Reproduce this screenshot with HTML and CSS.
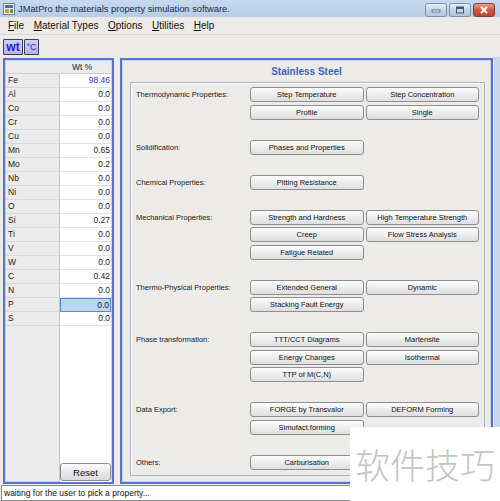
FILE: index.html
```html
<!DOCTYPE html>
<html>
<head>
  <title>JMatPro</title>
  <link rel="stylesheet" href="styles.css">
</head>
<body>
<div class="window">
  <div class="titlebar">
    <svg class="app-icon" width="12" height="12" viewBox="0 0 12 12">
      <rect x="0.5" y="0.5" width="11" height="11" fill="#f4f6fa" stroke="#6d7f9c"/>
      <rect x="2" y="2" width="8" height="3" fill="#3f6fc4"/>
      <rect x="2" y="6" width="4" height="4" fill="#e0903a"/>
      <rect x="7" y="6" width="3" height="4" fill="#5a9a4a"/>
    </svg>
    <span class="title">JMatPro the materials property simulation software.</span>
    <div class="win-buttons">
      <span class="wbtn"><svg width="10" height="6" viewBox="0 0 10 6"><rect x="1" y="3" width="8" height="2" fill="#fff" stroke="#44546e" stroke-width="0.8"/></svg></span>
      <span class="wbtn"><svg width="10" height="8" viewBox="0 0 10 8"><rect x="1.5" y="1" width="7" height="6" fill="none" stroke="#44546e" stroke-width="1"/><rect x="1.5" y="1" width="7" height="2" fill="#44546e"/></svg></span>
      <span class="wbtn close"><svg width="10" height="8" viewBox="0 0 10 8"><path d="M2 1 L8 7 M8 1 L2 7" stroke="#fff" stroke-width="2"/></svg></span>
    </div>
  </div>

  <div class="menubar">
    <span><u>F</u>ile</span>
    <span><u>M</u>aterial Types</span>
    <span><u>O</u>ptions</span>
    <span><u>U</u>tilities</span>
    <span><u>H</u>elp</span>
  </div>

  <div class="toolbar">
    <button class="unit wt">wt</button>
    <button class="unit degc">°C</button>
  </div>

  <div class="main">
    <div class="comp-panel">
      <div class="comp-head">Wt %</div>
      <div class="comp-body">
        <div class="names">
          <div class="cell">Fe</div>
          <div class="cell">Al</div>
          <div class="cell">Co</div>
          <div class="cell">Cr</div>
          <div class="cell">Cu</div>
          <div class="cell">Mn</div>
          <div class="cell">Mo</div>
          <div class="cell">Nb</div>
          <div class="cell">Ni</div>
          <div class="cell">O</div>
          <div class="cell">Si</div>
          <div class="cell">Ti</div>
          <div class="cell">V</div>
          <div class="cell">W</div>
          <div class="cell">C</div>
          <div class="cell">N</div>
          <div class="cell">P</div>
          <div class="cell">S</div>
        </div>
        <div class="values">
          <div class="cell base">98.46</div>
          <div class="cell">0.0</div>
          <div class="cell">0.0</div>
          <div class="cell">0.0</div>
          <div class="cell">0.0</div>
          <div class="cell">0.65</div>
          <div class="cell">0.2</div>
          <div class="cell">0.0</div>
          <div class="cell">0.0</div>
          <div class="cell">0.0</div>
          <div class="cell">0.27</div>
          <div class="cell">0.0</div>
          <div class="cell">0.0</div>
          <div class="cell">0.0</div>
          <div class="cell">0.42</div>
          <div class="cell">0.0</div>
          <div class="cell selected">0.0</div>
          <div class="cell">0.0</div>
          <button class="reset">Reset</button>
        </div>
      </div>
    </div>

    <div class="prop-panel">
      <div class="prop-title">Stainless Steel</div>
      <div class="group">
        <div class="section">
          <div class="label">Thermodynamic Properties:</div>
          <div class="btns">
            <button>Step Temperature</button>
            <button>Step Concentration</button>
            <button>Profile</button>
            <button>Single</button>
          </div>
        </div>
        <div class="section">
          <div class="label">Solidification:</div>
          <div class="btns">
            <button>Phases and Properties</button>
          </div>
        </div>
        <div class="section">
          <div class="label">Chemical Properties:</div>
          <div class="btns">
            <button>Pitting Resistance</button>
          </div>
        </div>
        <div class="section">
          <div class="label">Mechanical Properties:</div>
          <div class="btns">
            <button>Strength and Hardness</button>
            <button>High Temperature Strength</button>
            <button>Creep</button>
            <button>Flow Stress Analysis</button>
            <button>Fatigue Related</button>
          </div>
        </div>
        <div class="section">
          <div class="label">Thermo-Physical Properties:</div>
          <div class="btns">
            <button>Extended General</button>
            <button>Dynamic</button>
            <button>Stacking Fault Energy</button>
          </div>
        </div>
        <div class="section">
          <div class="label">Phase transformation:</div>
          <div class="btns">
            <button>TTT/CCT Diagrams</button>
            <button>Martensite</button>
            <button>Energy Changes</button>
            <button>Isothermal</button>
            <button>TTP of M(C,N)</button>
          </div>
        </div>
        <div class="section">
          <div class="label">Data Export:</div>
          <div class="btns">
            <button>FORGE by Transvalor</button>
            <button>DEFORM Forming</button>
            <button>Simufact.forming</button>
          </div>
        </div>
        <div class="section">
          <div class="label">Others:</div>
          <div class="btns">
            <button>Carburisation</button>
          </div>
        </div>
      </div>
    </div>
    <div class="frame-edge"></div>
  </div>

  <div class="status">waiting for the user to pick a property...</div>

  <div class="watermark">软件技巧</div>
</div>
</body>
</html>
```

FILE: styles.css
```css
body {
  margin: 0;
  background-color: #ecebe7;
  font-family: "Liberation Sans", Arial, sans-serif;
  color: #111;
}

.window {
  position: relative;
  width: 500px;
  height: 501px;
  overflow: hidden;
  display: flex;
  flex-direction: column;
}

/* title bar */
.titlebar {
  height: 17px;
  display: flex;
  align-items: center;
  padding-left: 3px;
  background: linear-gradient(#c6d9ef, #b7cce6);
}

.app-icon {
  flex: none;
}

.title {
  margin-left: 3px;
  font-size: 9.3px;
  color: #1c2e4c;
}

.win-buttons {
  margin-left: auto;
  margin-right: 5px;
  display: flex;
  gap: 2px;
  align-self: flex-start;
  margin-top: 3px;
}

.wbtn {
  width: 20px;
  height: 12px;
  display: flex;
  align-items: center;
  justify-content: center;
  border: 1px solid #7b8fad;
  border-radius: 3px;
  background: linear-gradient(#e6eef8, #c2d3e8 50%, #b3c7e1);
}

.wbtn.close {
  background: linear-gradient(#e9a08e, #cf5a40 50%, #c0442d);
  border-color: #8a3a2c;
}

/* menu */
.menubar {
  height: 17px;
  display: flex;
  align-items: center;
  gap: 9.5px;
  padding-left: 8px;
  font-size: 10px;
  color: #111;
  border-bottom: 1px solid #dcdad5;
}

.menubar u {
  text-decoration: underline;
  text-underline-offset: 1px;
}

/* toolbar */
.toolbar {
  height: 22px;
  box-sizing: border-box;
  padding: 4px 0 0 3px;
  display: flex;
  gap: 1px;
}

.unit {
  height: 16px;
  padding: 0;
  border: 1px solid #3a3a5a;
  border-radius: 1px;
  background: linear-gradient(#d2d2f6, #b4b4e8);
  color: #2222cc;
  font-family: "Liberation Sans", Arial, sans-serif;
  font-weight: bold;
}

.unit.wt {
  width: 20px;
  font-size: 12px;
}

.unit.degc {
  width: 15px;
  font-size: 9px;
  font-weight: normal;
}

/* main area */
.main {
  height: 428px;
  box-sizing: border-box;
  padding: 1px 0 1px 3px;
  display: flex;
}

.comp-panel {
  width: 111px;
  box-sizing: border-box;
  border: 2px solid #5474d2;
  box-shadow: inset 0 0 0 1px #c9d3ee;
  display: flex;
  flex-direction: column;
  background-color: #ebebeb;
}

.comp-head {
  height: 12px;
  line-height: 12px;
  padding-left: 66px;
  font-size: 8.5px;
  color: #222;
  border-bottom: 1px solid #cfcfcf;
  margin: 1px 1px 0 1px;
}

.comp-body {
  flex: 1;
  display: flex;
  margin: 0 1px 0 1px;
}

.names {
  width: 53px;
  border-right: 1px solid #c4c4c4;
}

.values {
  flex: 1;
  display: flex;
  flex-direction: column;
  background-color: #fff;
}

.cell {
  height: 14px;
  box-sizing: border-box;
  border-bottom: 1px solid #d8d8d8;
  font-size: 8.5px;
  line-height: 13px;
  padding-left: 2px;
  color: #222;
}

.values .cell {
  text-align: right;
  padding: 0 1px 0 0;
  border-bottom-color: #e2e2e2;
}

.values .base {
  color: #3434c4;
}

.values .selected {
  background-color: #b9d6f6;
  border: 1px solid #5a86d6;
}

.reset {
  margin-top: auto;
  margin-bottom: 1px;
  height: 18px;
  border: 1px solid #8c8c8c;
  border-radius: 3px;
  background: linear-gradient(#fdfdfd, #e9e9e9 50%, #dcdcdc);
  font-family: "Liberation Sans", Arial, sans-serif;
  font-size: 9.5px;
  color: #111;
}

.prop-panel {
  width: 373px;
  margin-left: 6px;
  box-sizing: border-box;
  border: 2px solid #5474d2;
  box-shadow: inset 0 0 0 1px #c9d3ee;
  display: flex;
  flex-direction: column;
}

.prop-title {
  height: 22px;
  line-height: 24px;
  text-align: center;
  font-size: 10px;
  font-weight: bold;
  color: #3e62c4;
}

.group {
  flex: 1;
  margin: 0 6px 6px 8px;
  border: 1px solid #aeb4bf;
  box-shadow: inset 1px 1px 0 #fff;
  padding: 4px 5px 0 5px;
  display: flex;
  flex-direction: column;
  gap: 20px;
}

.section {
  display: flex;
}

.label {
  width: 114px;
  height: 15px;
  line-height: 15px;
  font-size: 7.5px;
  color: #1a1a1a;
}

.btns {
  display: grid;
  grid-template-columns: 113.5px 113.5px;
  grid-auto-rows: 15px;
  gap: 2.5px 2px;
}

.btns button {
  padding: 0;
  border: 1px solid #8e8e8e;
  border-radius: 3px;
  background: linear-gradient(#fefefe, #ededed 50%, #dedede);
  font-family: "Liberation Sans", Arial, sans-serif;
  font-size: 7.5px;
  color: #111;
}

.frame-edge {
  flex: 1;
  margin-left: 1px;
  margin-top: -1px;
  margin-bottom: -1px;
  background-color: #c8d8ec;
}

.status {
  height: 16px;
  box-sizing: border-box;
  margin-left: 1px;
  border: 1px solid #8a8a8a;
  background-color: #fff;
  font-size: 8.5px;
  line-height: 14px;
  padding-left: 2px;
  color: #111;
}

/* overlay stamp in the corner */
.watermark {
  position: absolute;
  left: 350px;
  top: 427px;
  width: 150px;
  height: 74px;
  background-color: #fff;
  color: #c4c4c4;
  font-family: "Noto Sans CJK SC", sans-serif;
  font-weight: 300;
  font-size: 35px;
  line-height: 74px;
  padding-left: 5px;
  box-sizing: border-box;
  letter-spacing: 0;
}
```
